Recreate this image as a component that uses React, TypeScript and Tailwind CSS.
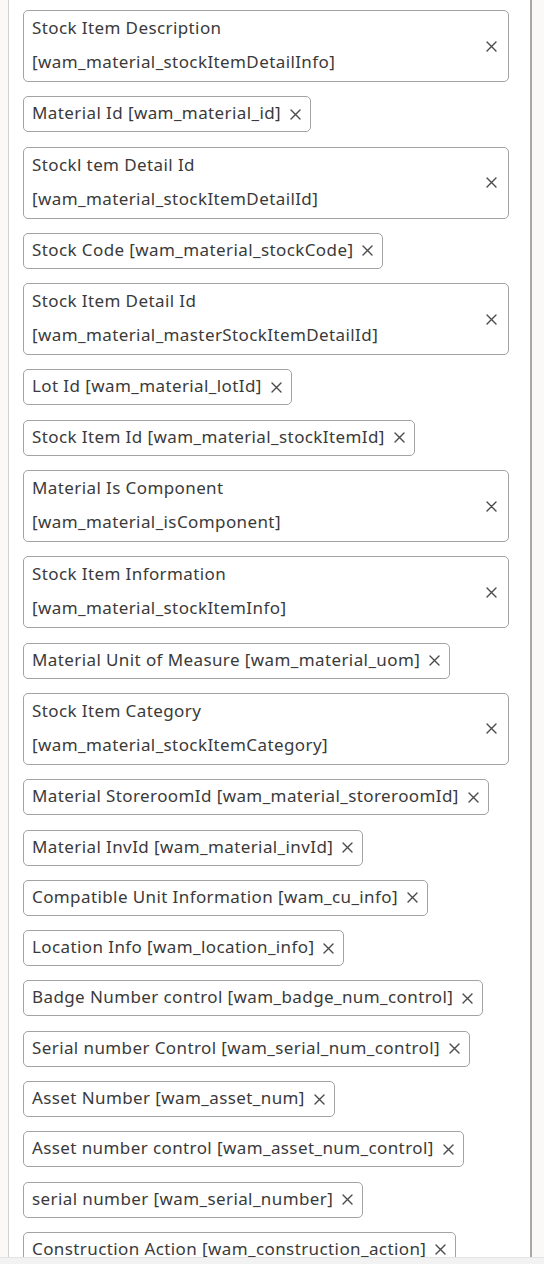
import React from 'react';

type Field = { label: string; key: string; twoLine?: boolean };

const fields: Field[] = [
  { label: 'Stock Item Description', key: 'wam_material_stockItemDetailInfo', twoLine: true },
  { label: 'Material Id', key: 'wam_material_id' },
  { label: 'Stockl tem Detail Id', key: 'wam_material_stockItemDetailId', twoLine: true },
  { label: 'Stock Code', key: 'wam_material_stockCode' },
  { label: 'Stock Item Detail Id', key: 'wam_material_masterStockItemDetailId', twoLine: true },
  { label: 'Lot Id', key: 'wam_material_lotId' },
  { label: 'Stock Item Id', key: 'wam_material_stockItemId' },
  { label: 'Material Is Component', key: 'wam_material_isComponent', twoLine: true },
  { label: 'Stock Item Information', key: 'wam_material_stockItemInfo', twoLine: true },
  { label: 'Material Unit of Measure', key: 'wam_material_uom' },
  { label: 'Stock Item Category', key: 'wam_material_stockItemCategory', twoLine: true },
  { label: 'Material StoreroomId', key: 'wam_material_storeroomId' },
  { label: 'Material InvId', key: 'wam_material_invId' },
  { label: 'Compatible Unit Information', key: 'wam_cu_info' },
  { label: 'Location Info', key: 'wam_location_info' },
  { label: 'Badge Number control', key: 'wam_badge_num_control' },
  { label: 'Serial number Control', key: 'wam_serial_num_control' },
  { label: 'Asset Number', key: 'wam_asset_num' },
  { label: 'Asset number control', key: 'wam_asset_num_control' },
  { label: 'serial number', key: 'wam_serial_number' },
  { label: 'Construction Action', key: 'wam_construction_action' },
];

const CloseIcon: React.FC = () => (
  <svg width="11" height="11" viewBox="0 0 11 11" className="shrink-0">
    <path d="M1 1L10 10M10 1L1 10" stroke="#4a4a4a" strokeWidth="1.4" strokeLinecap="round" />
  </svg>
);

const Chip: React.FC<{ field: Field }> = ({ field }) => {
  if (field.twoLine) {
    return (
      <div className="flex w-full items-center rounded-[5px] border border-[#a3a3a3] bg-white pl-2 pr-[11px]">
        <div className="flex-1 pb-[2px] leading-[34px]">
          <div>{field.label}</div>
          <div>[{field.key}]</div>
        </div>
        <CloseIcon />
      </div>
    );
  }
  return (
    <div className="flex max-w-full items-center gap-[9px] self-start rounded-[5px] border border-[#a3a3a3] bg-white pl-2 pr-[9px]">
      <span className="whitespace-nowrap pb-[2px] leading-[32px]">
        {field.label} [{field.key}]
      </span>
      <CloseIcon />
    </div>
  );
};

const App: React.FC = () => {
  return (
    <div className="flex h-[1264px] w-[544px] flex-col overflow-hidden bg-[#faf9f8] font-['Noto_Sans',sans-serif] text-[17px] tracking-[0.4px] text-[#3a3a3a]">
      <div className="flex min-h-0 flex-1 pl-2 pr-3">
        <div className="flex-1 overflow-hidden border-l border-r-2 border-l-[#d2d2d2] border-r-[#a8a8a8] bg-white pl-[14px] pr-[21px] pt-[10px]">
          <div className="flex flex-col gap-[14.3px]">
            {fields.map(f => (
              <Chip key={f.key} field={f} />
            ))}
          </div>
        </div>
      </div>
      <div className="h-[7px] border-t border-[#e3e3e3] bg-[#f2f2f2]" />
    </div>
  );
};

export default App;
